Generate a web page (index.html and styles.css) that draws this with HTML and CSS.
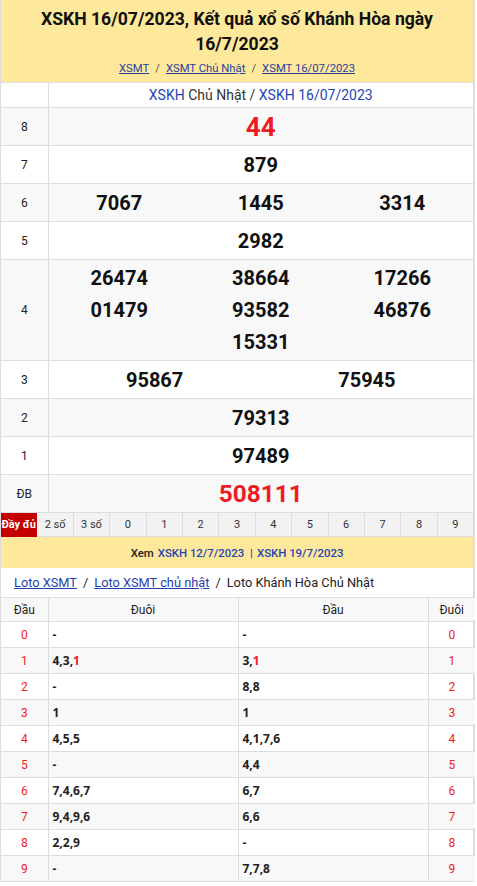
FILE: index.html
```html
<!DOCTYPE html>
<html lang="vi">
<head>
<meta charset="utf-8">
<title>XSKH 16/07/2023</title>
<link rel="stylesheet" href="styles.css">
</head>
<body>
<div class="page">
  <header class="head">
    <h1 class="title">XSKH 16/07/2023, Kết quả xổ số Khánh Hòa ngày 16/7/2023</h1>
    <div class="crumbs">
      <a href="#">XSMT</a><span class="sep">/</span><a href="#">XSMT Chủ Nhật</a><span class="sep">/</span><a href="#">XSMT 16/07/2023</a>
    </div>
  </header>

  <table class="kq">
    <colgroup><col class="c-lbl"><col></colgroup>
    <tr class="kq-top">
      <td></td>
      <td><a href="#">XSKH</a> Chủ Nhật / <a href="#">XSKH 16/07/2023</a></td>
    </tr>
    <tr class="alt">
      <td class="lbl">8</td>
      <td><div class="nums one"><span class="n red big">44</span></div></td>
    </tr>
    <tr>
      <td class="lbl">7</td>
      <td><div class="nums one"><span class="n">879</span></div></td>
    </tr>
    <tr class="alt">
      <td class="lbl">6</td>
      <td><div class="nums three"><span class="n">7067</span><span class="n">1445</span><span class="n">3314</span></div></td>
    </tr>
    <tr>
      <td class="lbl">5</td>
      <td><div class="nums one"><span class="n">2982</span></div></td>
    </tr>
    <tr class="alt">
      <td class="lbl">4</td>
      <td><div class="nums three tall"><span class="n">26474</span><span class="n">38664</span><span class="n">17266</span><span class="n">01479</span><span class="n">93582</span><span class="n">46876</span><span class="n mid">15331</span></div></td>
    </tr>
    <tr>
      <td class="lbl">3</td>
      <td><div class="nums two"><span class="n">95867</span><span class="n">75945</span></div></td>
    </tr>
    <tr class="alt">
      <td class="lbl">2</td>
      <td><div class="nums one"><span class="n">79313</span></div></td>
    </tr>
    <tr>
      <td class="lbl">1</td>
      <td><div class="nums one"><span class="n">97489</span></div></td>
    </tr>
    <tr class="alt">
      <td class="lbl">ĐB</td>
      <td><div class="nums one"><span class="n red db">508111</span></div></td>
    </tr>
  </table>

  <div class="tabs">
    <span class="tab on">Đầy đủ</span>
    <span class="tab">2 số</span>
    <span class="tab">3 số</span>
    <span class="tab">0</span>
    <span class="tab">1</span>
    <span class="tab">2</span>
    <span class="tab">3</span>
    <span class="tab">4</span>
    <span class="tab">5</span>
    <span class="tab">6</span>
    <span class="tab">7</span>
    <span class="tab">8</span>
    <span class="tab">9</span>
  </div>

  <div class="xem">Xem <a href="#">XSKH 12/7/2023</a> <span class="pipe">|</span> <a href="#">XSKH 19/7/2023</a></div>

  <div class="loto-crumbs">
    <a href="#">Loto XSMT</a><span class="sep">/</span><a href="#">Loto XSMT chủ nhật</a><span class="sep">/</span><span>Loto Khánh Hòa Chủ Nhật</span>
  </div>

  <table class="loto">
    <colgroup><col class="c-d"><col class="c-v"><col class="c-v"><col class="c-d"></colgroup>
    <tr class="lh"><th>Đầu</th><th>Đuôi</th><th>Đầu</th><th>Đuôi</th></tr>
    <tr><td class="d">0</td><td class="v">-</td><td class="v">-</td><td class="d">0</td></tr>
    <tr class="alt"><td class="d">1</td><td class="v">4,3,<span class="r">1</span></td><td class="v">3,<span class="r">1</span></td><td class="d">1</td></tr>
    <tr><td class="d">2</td><td class="v">-</td><td class="v">8,8</td><td class="d">2</td></tr>
    <tr class="alt"><td class="d">3</td><td class="v">1</td><td class="v">1</td><td class="d">3</td></tr>
    <tr><td class="d">4</td><td class="v">4,5,5</td><td class="v">4,1,7,6</td><td class="d">4</td></tr>
    <tr class="alt"><td class="d">5</td><td class="v">-</td><td class="v">4,4</td><td class="d">5</td></tr>
    <tr><td class="d">6</td><td class="v">7,4,6,7</td><td class="v">6,7</td><td class="d">6</td></tr>
    <tr class="alt"><td class="d">7</td><td class="v">9,4,9,6</td><td class="v">6,6</td><td class="d">7</td></tr>
    <tr><td class="d">8</td><td class="v">2,2,9</td><td class="v">-</td><td class="d">8</td></tr>
    <tr class="alt"><td class="d">9</td><td class="v">-</td><td class="v">7,7,8</td><td class="d">9</td></tr>
  </table>
</div>
</body>
</html>
```

FILE: styles.css
```css
* { box-sizing: border-box; }
html, body { margin: 0; padding: 0; background: #fff; }
body { font-family: Roboto, "Liberation Sans", Arial, sans-serif; color: #222; }
a { color: #1f3fae; }

.page {
  width: 475px;
  border-left: 1px solid #dddddf;
  border-right: 2px solid #dddddf;
}

.head {
  background: #fee89b;
  padding: 7px 8px 0;
  height: 82px;
  text-align: center;
}
.title {
  margin: 0;
  font-size: 17.6px;
  line-height: 25px;
  font-weight: 700;
  color: #111;
  padding: 0 20px;
}
.crumbs {
  margin-top: 4px;
  font-size: 11.3px;
  line-height: 16px;
  color: #555;
}
.crumbs a { color: #2a3f9f; }
.crumbs .sep { margin: 0 6px; }

.kq, .loto {
  width: 100%;
  border-collapse: collapse;
  table-layout: fixed;
}
.kq td {
  border: 1px solid #dddddf;
  padding: 0;
  text-align: center;
}
.kq tr > td:first-child { border-left: 0; }
.kq tr > td:last-child { border-right: 0; }
.c-lbl { width: 47px; }
.kq-top td {
  height: 25px;
  font-size: 14px;
  color: #333;
}
.kq-top a { text-decoration: none; color: #1f45b5; }
.alt { background: #f8f8f8; }
.lbl { font-size: 12px; color: #222; }

.nums {
  display: grid;
  align-items: center;
  justify-items: center;
}
.nums.one { grid-template-columns: 1fr; height: 37px; }
.nums.two { grid-template-columns: 1fr 1fr; height: 37px; }
.nums.three { grid-template-columns: 1fr 1fr 1fr; height: 37px; }
.nums.tall { height: 100px; padding: 2px 0; grid-auto-rows: 32px; }
.nums .mid { grid-column: 2; }
.n {
  font-size: 20px;
  font-weight: 700;
  color: #111;
  line-height: 32px;
}
.n.red { color: #ec1c24; }
.n.big { font-size: 26px; }
.n.db { font-size: 24.4px; }

.tabs {
  display: flex;
  height: 24px;
}
.tab {
  flex: 1 1 0;
  display: flex;
  align-items: center;
  justify-content: center;
  font-size: 11px;
  color: #333;
  background: #f2f2f2;
  border-right: 1px solid #dddddf;
  border-bottom: 1px solid #dddddf;
  white-space: nowrap;
}
.tab:last-child { border-right: 0; }
.tab.on {
  background: #c40000;
  color: #fff;
  font-weight: 700;
  border-color: #c40000;
}

.xem {
  background: #fee89b;
  height: 31px;
  display: flex;
  align-items: center;
  justify-content: center;
  gap: 4px;
  font-size: 11.4px;
  font-weight: 500;
  color: #222;
}
.xem a { text-decoration: none; color: #1f45b5; }
.xem .pipe { color: #1f45b5; margin-left: 2px; }

.loto-crumbs {
  height: 29px;
  display: flex;
  align-items: center;
  padding-left: 13px;
  font-size: 12.8px;
  color: #222;
}
.loto-crumbs a { color: #1f3fae; }
.loto-crumbs .sep { margin: 0 6px; }

.c-d { width: 47px; }
.c-v { width: 190px; }
.loto th, .loto td {
  border: 1px solid #dddddf;
  padding: 0;
  height: 26px;
}
.loto tr > :first-child { border-left: 0; }
.loto tr > :last-child { border-right: 0; }
.loto th {
  height: 24px;
  font-size: 12px;
  font-weight: 400;
  color: #222;
  background: #f8f8f8;
}
.loto td.d {
  text-align: center;
  font-size: 12px;
  color: #ec1c24;
}
.loto td.v {
  padding-left: 4px;
  font-family: "Open Sans", "Noto Sans", sans-serif;
  font-size: 12px;
  font-weight: 700;
  color: #222;
}
.loto .r { color: #ec1c24; }
```
